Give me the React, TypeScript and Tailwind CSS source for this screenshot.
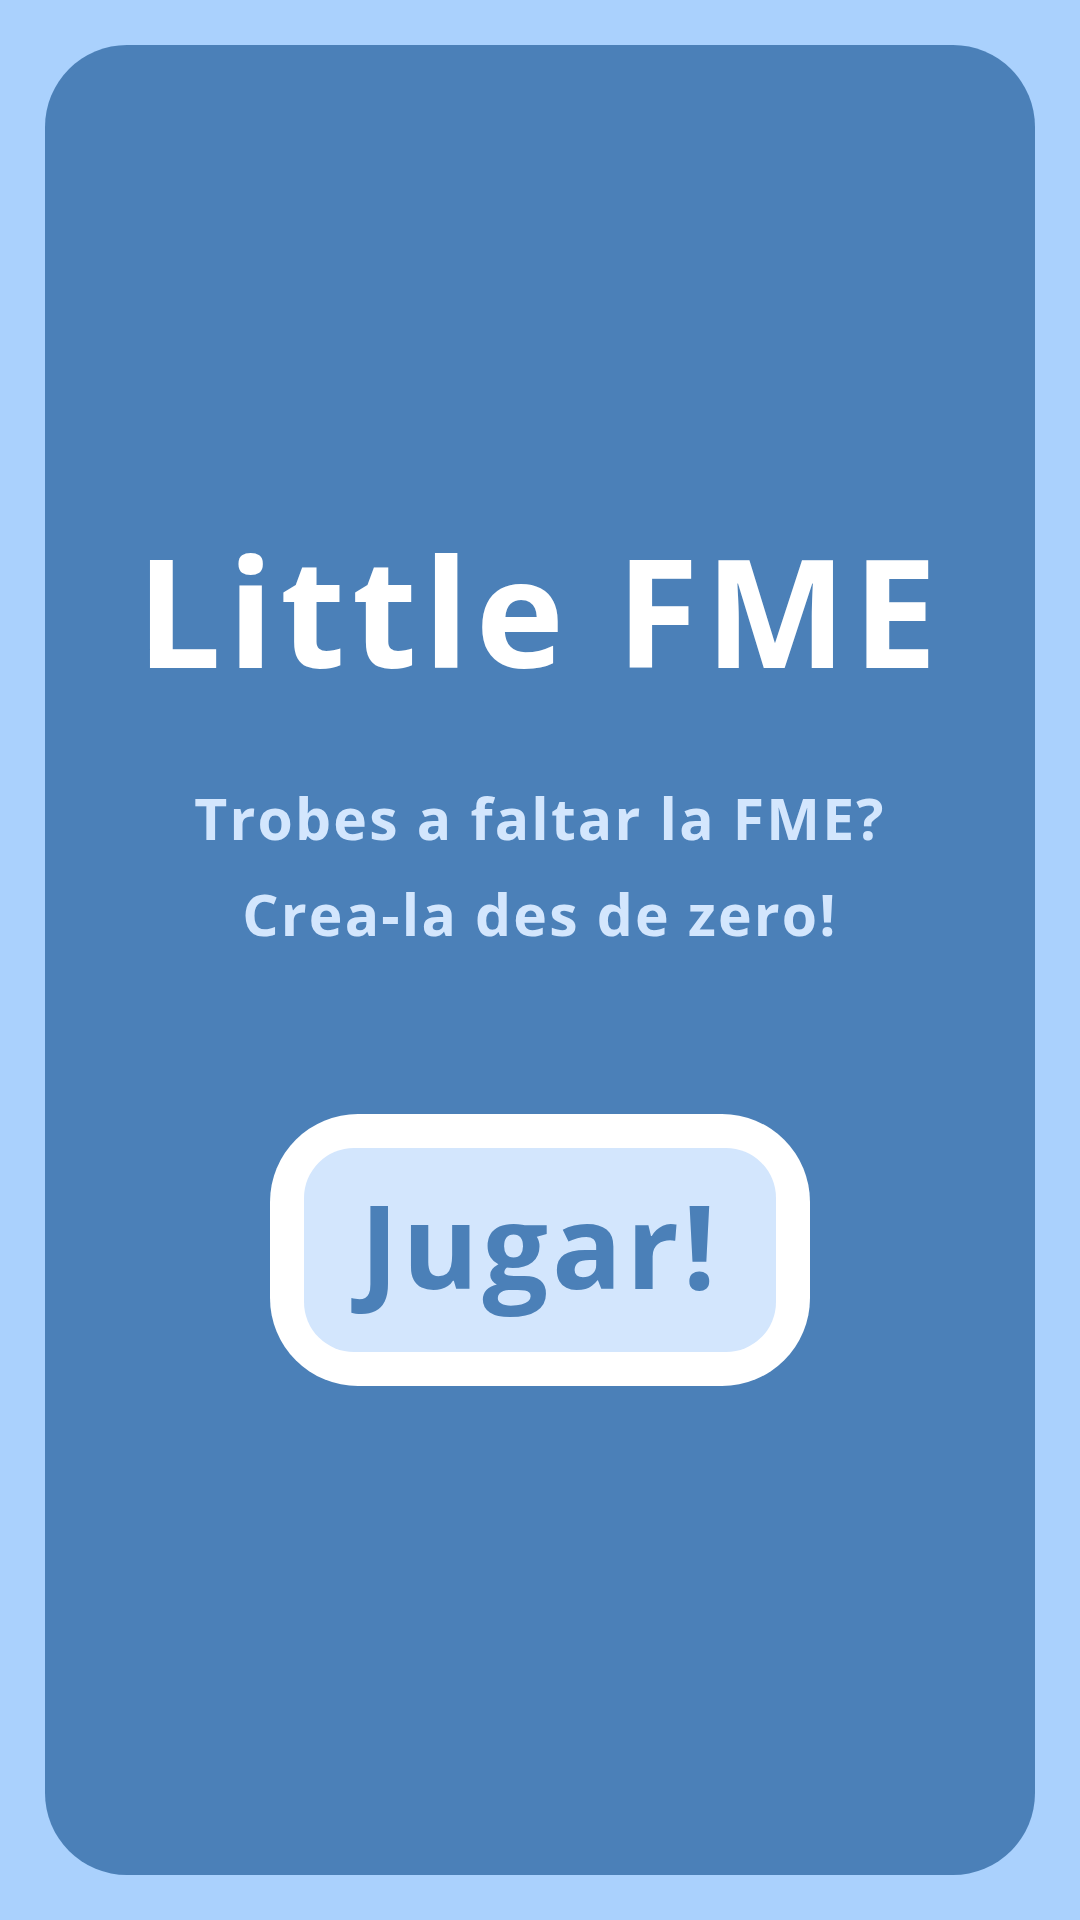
export default function App() {
  return (
    <div className="w-[1080px] h-[1920px] bg-[#aad1fd] p-[45px]" style={{ fontFamily: '"Open Sans", "Noto Sans", sans-serif' }}>
      <div className="h-full w-full rounded-[82px] bg-[#4b80b8] flex flex-col items-center justify-center">
        <h1 className="text-[150px] leading-none font-bold text-white tracking-[6.5px]">Little FME</h1>
        <p className="mt-[85px] text-[57px] leading-[96px] font-bold text-[#d3e6fd] text-center tracking-[2.2px]">
          Trobes a faltar la FME?
          <br />
          Crea-la des de zero!
        </p>
        <button className="mt-[152px] w-[540px] h-[272px] rounded-[88px] bg-white p-[34px]">
          <div className="h-full w-full rounded-[50px] bg-[#d3e6fd] flex items-center justify-center">
            <span className="text-[116px] leading-none font-bold text-[#4b80b8] tracking-[4px] -mt-[12px]">Jugar!</span>
          </div>
        </button>
      </div>
    </div>
  );
}
